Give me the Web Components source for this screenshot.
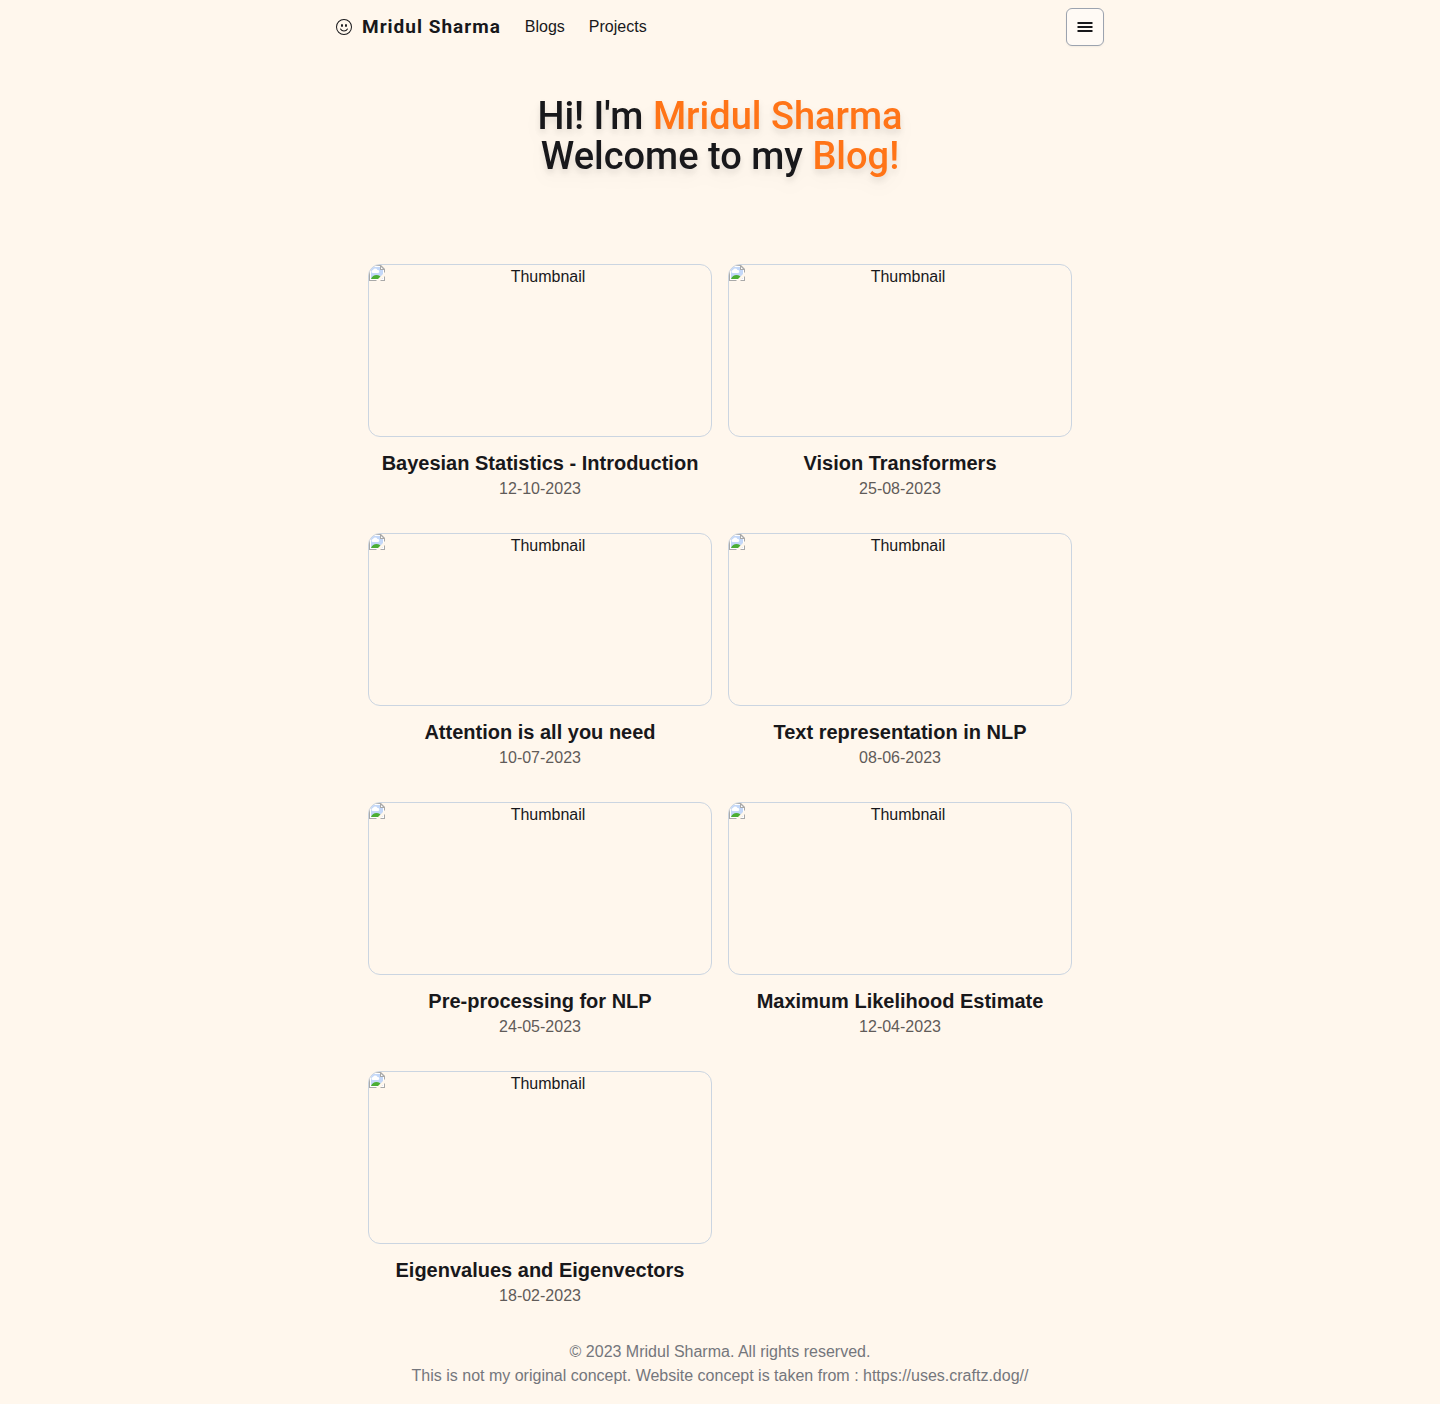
<!DOCTYPE html>
<html lang="en">
<head>
<meta charset="utf-8">
<meta name="viewport" content="width=device-width, initial-scale=1">
<title>Mridul Sharma</title>
<style>
  body { margin: 0; background: #fff7ed; color: #18181b; font: 16px/24px "Liberation Sans", Arial, sans-serif; }
</style>
</head>
<body>
<blog-page></blog-page>
<script>
const define = (name, html) => customElements.define(name, class extends HTMLElement {
  constructor() {
    super();
    this.attachShadow({ mode: "open" }).innerHTML = html;
  }
});

define("site-nav", `
<style>
  :host { display: block; }
  nav { display: flex; align-items: center; gap: 24px; max-width: 768px; margin: 0 auto; padding: 8px 0; }
  a { color: inherit; text-decoration: none; }
  .brand { display: flex; align-items: center; gap: 10px; font: 700 19px/28px Roboto, sans-serif; letter-spacing: 1px; }
  svg { display: block; }
  button { display: flex; align-items: center; justify-content: center; width: 38px; height: 38px; margin-left: auto; padding: 0; border: 1px solid #9ca3af; border-radius: 6px; background: #fffaf5; box-shadow: 0 1px 2px rgb(0 0 0 / .05); color: inherit; }
</style>
<nav>
  <a class="brand" href="#home">
    <svg width="16" height="16" viewBox="0 0 16 16" fill="currentColor" aria-hidden="true">
      <path d="M8 15A7 7 0 1 1 8 1a7 7 0 0 1 0 14m0 1A8 8 0 1 0 8 0a8 8 0 0 0 0 16"/>
      <path d="M4.285 9.567a.5.5 0 0 1 .683.183A3.5 3.5 0 0 0 8 11.5a3.5 3.5 0 0 0 3.032-1.75.5.5 0 1 1 .866.5A4.5 4.5 0 0 1 8 12.5a4.5 4.5 0 0 1-3.898-2.25.5.5 0 0 1 .183-.683M7 6.5C7 7.328 6.552 8 6 8s-1-.672-1-1.5S5.448 5 6 5s1 .672 1 1.5m4 0c0 .828-.448 1.5-1 1.5s-1-.672-1-1.5S9.448 5 10 5s1 .672 1 1.5"/>
    </svg>
    <span>Mridul Sharma</span>
  </a>
  <a href="#blogs">Blogs</a>
  <a href="#projects">Projects</a>
  <button type="button" aria-label="Menu">
    <svg width="16" height="16" viewBox="0 0 16 16" fill="none" stroke="currentColor" stroke-width="2" aria-hidden="true">
      <path d="M.5 4h15M.5 8h15M.5 12h15"/>
    </svg>
  </button>
</nav>`);

define("page-hero", `
<style>
  :host { display: block; padding: 42px 0 88px; text-align: center; }
  h1 { margin: 0; font: 500 38px/40px Roboto, sans-serif; filter: drop-shadow(0 10px 8px rgb(0 0 0 / .04)) drop-shadow(0 4px 3px rgb(0 0 0 / .1)); }
  ::slotted(em) { font-style: normal; color: #ff7417; }
</style>
<h1><slot></slot></h1>`);

define("blog-card", `
<style>
  :host { display: block; text-align: center; }
  a { display: block; color: inherit; text-decoration: none; }
  .thumb { display: flex; aspect-ratio: 344 / 173; box-sizing: border-box; border: 1px solid #cbd5e1; border-radius: 12px; overflow: hidden; }
  .thumb svg { flex: none; }
  .thumb span { flex: 1; }
  h2 { margin: 12px 0 0; font-size: 20px; line-height: 28px; font-weight: 700; }
  p { margin: 0; color: #5f5b59; }
</style>
<a href="#post">
  <div class="thumb">
    <svg width="16" height="16" viewBox="0 0 16 16" aria-hidden="true">
      <path d="M0 0h12l4 4v12H0z" fill="#a9a9a9"/>
      <path d="M1 1h10l4 4v10H1z" fill="#fff"/>
      <path d="M2 2h9v3h3v9H2z" fill="#c3d7f8"/>
      <path d="M4 8a1.500 1.500 0 0 1 0-3 2.500 2.500 0 0 1 4.500 0A1.500 1.500 0 0 1 9 8z" fill="#fff"/>
      <path d="M2 14c1-2.500 3-4 5.500-4s4.500 1.500 5.500 4z" fill="#4cae35"/>
      <path d="M11 0v5h5l-1-1h-3V1z" fill="#a9a9a9"/>
      <path d="M16 7v4l-5 5H7z" fill="#fff7ed"/>
    </svg>
    <span>Thumbnail</span>
  </div>
  <h2><slot></slot></h2>
  <p><slot name="date"></slot></p>
</a>`);

define("card-grid", `
<style>
  :host { display: grid; grid-template-columns: repeat(2, minmax(0, 1fr)); gap: 32px 16px; max-width: 704px; margin: 0 auto; }
</style>
<slot></slot>`);

define("site-footer", `
<style>
  :host { display: block; padding: 32px 0 16px; text-align: center; color: #74767c; }
  p { margin: 0; }
  a { color: inherit; text-decoration: none; }
</style>
<footer>
  <p>© 2023 Mridul Sharma. All rights reserved.</p>
  <p>This is not my original concept. Website concept is taken from : <a href="https://uses.craftz.dog//">https://uses.craftz.dog//</a></p>
</footer>`);

define("blog-page", `
<style>:host { display: block; }</style>
<site-nav></site-nav>
<main>
  <page-hero>Hi! I'm <em>Mridul Sharma</em><br>Welcome to my <em>Blog!</em></page-hero>
  <card-grid>
    <blog-card>Bayesian Statistics - Introduction<span slot="date">12-10-2023</span></blog-card>
    <blog-card>Vision Transformers<span slot="date">25-08-2023</span></blog-card>
    <blog-card>Attention is all you need<span slot="date">10-07-2023</span></blog-card>
    <blog-card>Text representation in NLP<span slot="date">08-06-2023</span></blog-card>
    <blog-card>Pre-processing for NLP<span slot="date">24-05-2023</span></blog-card>
    <blog-card>Maximum Likelihood Estimate<span slot="date">12-04-2023</span></blog-card>
    <blog-card>Eigenvalues and Eigenvectors<span slot="date">18-02-2023</span></blog-card>
  </card-grid>
</main>
<site-footer></site-footer>`);
</script>
</body>
</html>
